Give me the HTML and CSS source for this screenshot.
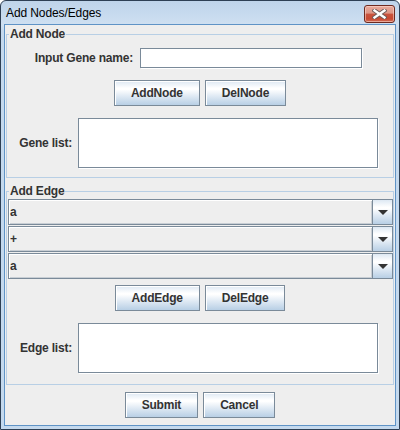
FILE: index.html
```html
<!DOCTYPE html>
<html>
<head>
<meta charset="utf-8">
<title>Add Nodes/Edges</title>
<link rel="stylesheet" href="styles.css">
</head>
<body>
<div class="window">
  <div class="titlebar">
    <span class="title">Add Nodes/Edges</span>
    <span class="close">
      <svg width="15" height="10" viewBox="0 0 15 10">
        <path d="M2.5 1.5 L12.5 8.5 M12.5 1.5 L2.5 8.5" stroke="#6a5a58" stroke-width="4.2" stroke-linecap="square" fill="none"/>
        <path d="M2.5 1.5 L12.5 8.5 M12.5 1.5 L2.5 8.5" stroke="#ffffff" stroke-width="2.4" stroke-linecap="square" fill="none"/>
      </svg>
    </span>
  </div>
  <div class="client">
    <fieldset class="group group-node">
      <legend class="legend">Add Node</legend>
      <div class="row row-input">
        <span class="lbl lbl-input">Input Gene name:</span>
        <div class="field"></div>
      </div>
      <div class="btnrow">
        <span class="btn">AddNode</span>
        <span class="btn">DelNode</span>
      </div>
      <div class="row row-list">
        <span class="lbl lbl-list">Gene list:</span>
        <div class="area"></div>
      </div>
    </fieldset>
    <fieldset class="group group-edge">
      <legend class="legend">Add Edge</legend>
      <div class="combos">
        <div class="combo"><span class="combo-value">a</span><span class="combo-arrow"><svg width="10" height="6" viewBox="0 0 10 6"><polygon points="0,0 10,0 5,5" fill="#333"/></svg></span></div>
        <div class="combo"><span class="combo-value">+</span><span class="combo-arrow"><svg width="10" height="6" viewBox="0 0 10 6"><polygon points="0,0 10,0 5,5" fill="#333"/></svg></span></div>
        <div class="combo"><span class="combo-value">a</span><span class="combo-arrow"><svg width="10" height="6" viewBox="0 0 10 6"><polygon points="0,0 10,0 5,5" fill="#333"/></svg></span></div>
      </div>
      <div class="btnrow btnrow-edge">
        <span class="btn">AddEdge</span>
        <span class="btn">DelEdge</span>
      </div>
      <div class="row row-list">
        <span class="lbl lbl-list">Edge list:</span>
        <div class="area"></div>
      </div>
    </fieldset>
    <div class="btnrow btnrow-dialog">
      <span class="btn">Submit</span>
      <span class="btn">Cancel</span>
    </div>
  </div>
</div>
</body>
</html>
```

FILE: styles.css
```css
* { box-sizing: border-box; }

html, body {
  margin: 0;
  padding: 0;
  background: #ffffff;
}

body {
  font-family: "Liberation Sans", Arial, sans-serif;
  color: #333333;
}

.window {
  width: 400px;
  height: 430px;
  border: 1px solid #2e3f54;
  border-radius: 6px 6px 0 0;
  background: linear-gradient(#bfd4ea 0px, #c6daee 12px, #cfe0f1 24px, #c4d9ee 30px, #c4d9ee 100%);
  padding: 0 3px 3px 3px;
  display: flex;
  flex-direction: column;
}

.titlebar {
  height: 23px;
  display: flex;
  align-items: flex-start;
  justify-content: space-between;
  padding-left: 2px;
}

.title {
  font-family: "Liberation Sans", Arial, sans-serif;
  font-size: 12px;
  line-height: 14px;
  margin-top: 5px;
  color: #000000;
  letter-spacing: -0.1px;
}

.close {
  width: 31px;
  height: 18px;
  margin-top: 4px;
  margin-right: 1px;
  border: 1px solid #6e2a20;
  border-radius: 3px;
  background: linear-gradient(#e9aa9c 0%, #dc9585 45%, #c9533d 50%, #c74a33 80%, #d16e58 100%);
  box-shadow: inset 0 0 0 1px rgba(255, 220, 210, 0.55);
  display: flex;
  align-items: center;
  justify-content: center;
}

.client {
  flex: 1;
  background: #eeeeee;
  border: 1px solid #5f93c6;
  display: flex;
  flex-direction: column;
}

.group {
  margin: 2px 1px 0 1px;
  padding: 0;
  border: 1px solid #b8cfe5;
  min-width: 0;
}

.group-node {
  padding-bottom: 9px;
}

.group-edge {
  margin-top: 6px;
  padding-bottom: 11px;
}

.legend {
  margin-left: 2px;
  padding: 0 1px;
  font-weight: bold;
  font-size: 12px;
  line-height: 14px;
  color: #333333;
  letter-spacing: -0.2px;
}

.row {
  display: flex;
  align-items: center;
}

.row-input {
  margin-top: 7px;
  gap: 7px;
}

.row-list {
  margin-top: 12px;
  gap: 6px;
}

.lbl {
  font-weight: bold;
  font-size: 12px;
  color: #333333;
  text-align: right;
  white-space: nowrap;
  letter-spacing: -0.2px;
}

.lbl-input {
  width: 126px;
}

.lbl-list {
  width: 65px;
}

.field {
  width: 222px;
  height: 20px;
  background: #ffffff;
  border: 1px solid #7a8a99;
  box-shadow: 1px 1px 0 #ffffff;
}

.area {
  width: 300px;
  height: 50px;
  background: #ffffff;
  border: 1px solid #7a8a99;
  box-shadow: 1px 1px 0 #ffffff;
}

.btnrow {
  display: flex;
  justify-content: center;
  gap: 5px;
  margin-top: 12px;
}

.btnrow-edge {
  margin-top: 6px;
}

.btnrow-dialog {
  margin-top: 7px;
}

.btn {
  height: 26px;
  padding: 0 16px;
  border: 1px solid #7a8a99;
  background: linear-gradient(#dde8f3 0%, #ffffff 30%, #ffffff 35%, #dde8f3 65%, #b8cfe5 100%);
  box-shadow: inset 1px 1px 0 #ffffff;
  font-weight: bold;
  font-size: 12px;
  letter-spacing: -0.2px;
  color: #333333;
  display: flex;
  align-items: center;
  justify-content: center;
}

.combos {
  display: flex;
  flex-direction: column;
  gap: 1px;
  margin-top: 1px;
  margin-left: 1px;
}

.combo {
  height: 26px;
  display: flex;
  border: 1px solid #7a8a99;
  background: #eeeeee;
}

.combo-value {
  flex: 1;
  display: flex;
  align-items: center;
  padding-left: 1px;
  font-weight: bold;
  font-size: 12px;
  color: #333333;
  box-shadow: inset 1px 1px 0 #ffffff, inset -1px -1px 0 #c8ced4;
}

.combo-arrow {
  width: 20px;
  border-left: 1px solid #7a8a99;
  background: linear-gradient(#dde8f3 0%, #ffffff 30%, #ffffff 35%, #dde8f3 65%, #b8cfe5 100%);
  display: flex;
  align-items: center;
  justify-content: center;
  padding-top: 1px;
}
```
